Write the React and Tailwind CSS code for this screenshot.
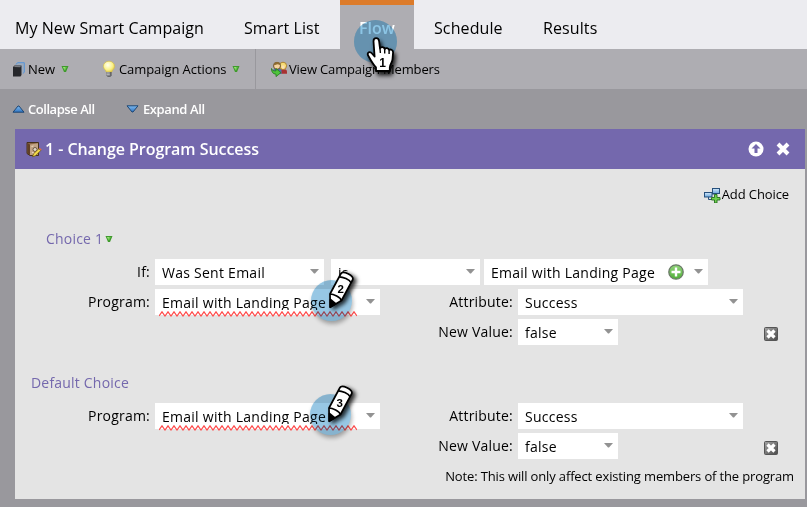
import React from "react";

function GreenArrow() {
  return (
    <svg width="8" height="8" viewBox="0 0 8 8" className="shrink-0">
      <path d="M0.500 1h7L5 7H3z" fill="#3f9a2c" />
      <path d="M1.800 2h4L4.200 5.200h-.8z" fill="#6cc94e" />
      <path d="M2 2h2L3.400 4z" fill="#a0e082" />
    </svg>
  );
}

function BlueArrow({ down }) {
  return (
    <svg width="13" height="8" viewBox="0 0 13 8" className="shrink-0">
      <defs>
        <linearGradient id="ba" x1="0" y1="0" x2="0" y2="1">
          <stop offset="0" stopColor="#7fbaf0" />
          <stop offset="1" stopColor="#2f75c2" />
        </linearGradient>
      </defs>
      <path d={down ? "M1 .8h11L7 7H6z" : "M1 7.200h11L7 1H6z"} fill="url(#ba)" stroke="#1f4673" strokeWidth="1" />
    </svg>
  );
}

function Bulb() {
  return (
    <svg width="14" height="18" viewBox="0 0 14 18" className="shrink-0">
      <defs>
        <radialGradient id="bulb" cx="0.4" cy="0.35" r="0.7">
          <stop offset="0" stopColor="#fffff0" />
          <stop offset="0.6" stopColor="#faf28a" />
          <stop offset="1" stopColor="#e0c63c" />
        </radialGradient>
      </defs>
      <path d="M7 1.2C3.7 1.2 1.4 3.500 1.400 6.400c0 2.700 2.600 3.600 2.900 5.800h5.400c.3-2.200 2.900-3.100 2.900-5.800C12.600 3.500 10.300 1.200 7 1.200z" fill="url(#bulb)" stroke="#d3bb50" strokeWidth="0.7" />
      <path d="M4.300 12h5.400v3.300L8.300 17H5.700l-1.400-1.700z" fill="#66676b" />
      <path d="M4.500 13h3.300M4.500 14.800h3.300" stroke="#dcdcdf" strokeWidth="0.900" />
    </svg>
  );
}

function NewIcon() {
  return (
    <svg width="12" height="15" viewBox="0 0 12 15" className="shrink-0">
      <path d="M3 2.500L4.500.7h6.800v9.600l-1.500 1.200" fill="#9dabbc" stroke="#5594d8" strokeWidth="1" />
      <path d="M0 5L1.500 3.500H8.500V13L7.500 14.500H0z" fill="#26272b" />
      <path d="M.8 5L2 3.800h6L7.200 5.200z" fill="#77797e" />
    </svg>
  );
}

function Members() {
  return (
    <svg width="17" height="16" viewBox="0 0 17 16" className="shrink-0">
      <path d="M9 9.500c0-2 7-2 7 1v2.300H9z" fill="#a83232" />
      <path d="M2 9c1-2 8-2 8.500 0v4H3z" fill="#4a73b5" />
      <circle cx="12" cy="4.800" r="3.600" fill="#f6dc75" stroke="#a97d28" strokeWidth="0.900" />
      <path d="M10.500 4.500h3v3.200h-2.500z" fill="#fbe0b5" />
      <circle cx="6" cy="4.800" r="3.500" fill="#f5d3a0" stroke="#5b4422" strokeWidth="0.900" />
      <path d="M2.600 4.500C2.600 0 9.400 0 9.400 4L6.500 3.200z" fill="#8d6c33" />
      <path d="M.5 7.500c.5 2 2 2.500 4.500 2.400V7.600l5 4-5 4v-2.400C2 13 .3 11 .5 7.500z" fill="#4fc43c" stroke="#237a1a" strokeWidth="0.800" />
    </svg>
  );
}

function StepIcon() {
  return (
    <svg width="16" height="17" viewBox="0 0 16 17" className="shrink-0">
      <path d="M1 1.500h11.500v13H4L1 12.500z" fill="#8a6544" stroke="#46301c" strokeWidth="1" />
      <path d="M4 3.500l8-1.200v11.700H4z" fill="#c2a283" />
      <path d="M1.500 2L4 3.800v10.200L1.500 12.300z" fill="#604026" />
      <path d="M5.500 5.500l2-.5M6 11.500l2 .5" stroke="#ead9c2" strokeWidth="1" />
      <circle cx="9" cy="8.500" r="2" fill="#dfd6c8" stroke="#594331" strokeWidth="0.800" />
      <path d="M6.500 15.800l1-3L12.800 7.700l2 1.800-5.300 5.300z" fill="#f2da48" stroke="#6a5419" strokeWidth="0.800" />
      <path d="M12.800 7.700l1-1 2 1.800-1 1z" fill="#d96b4b" />
    </svg>
  );
}

function AddChoiceIcon() {
  return (
    <svg width="17" height="16" viewBox="0 0 17 16" className="shrink-0">
      <defs>
        <linearGradient id="ac" x1="0" y1="0" x2="0" y2="1">
          <stop offset="0" stopColor="#d4eafb" />
          <stop offset="1" stopColor="#6ba6dc" />
        </linearGradient>
      </defs>
      <path d="M8 7h3M4.500 10v2.500H8" stroke="#27507c" fill="none" />
      <rect x="8.500" y="1.500" width="7" height="5" fill="url(#ac)" stroke="#27507c" />
      <rect x="0.500" y="5.500" width="7.500" height="4.500" fill="url(#ac)" stroke="#27507c" />
      <path d="M10.500 7.500h2.500v3h3V13h-3v3h-2.500v-3h-3v-2.500h3z" fill="#6fd04e" stroke="#256d1d" strokeWidth="0.900" />
    </svg>
  );
}

function DeleteIcon() {
  return (
    <svg width="14" height="14" viewBox="0 0 14 14" className="shrink-0">
      <defs>
        <linearGradient id="del" x1="0" y1="0" x2="1" y2="1">
          <stop offset="0" stopColor="#a5a5a5" />
          <stop offset="1" stopColor="#4a4a4a" />
        </linearGradient>
      </defs>
      <rect x="0.500" y="0.500" width="13" height="13" rx="1" fill="url(#del)" stroke="#555" />
      <path d="M3.500 3.500l7 7M10.500 3.500l-7 7" stroke="#fff" strokeWidth="3.200" />
    </svg>
  );
}

function PlusIcon() {
  return (
    <svg width="16" height="16" viewBox="0 0 16 16" className="shrink-0">
      <defs>
        <linearGradient id="pl" x1="0" y1="0" x2="0" y2="1">
          <stop offset="0" stopColor="#93d67c" />
          <stop offset="1" stopColor="#4fae37" />
        </linearGradient>
      </defs>
      <circle cx="8" cy="8" r="7.200" fill="url(#pl)" stroke="#6b7a68" strokeWidth="1.300" />
      <path d="M8 3.500v9M3.500 8h9" stroke="#fff" strokeWidth="2.400" />
    </svg>
  );
}

function Caret() {
  return (
    <svg width="9" height="5" viewBox="0 0 9 5" className="shrink-0">
      <path d="M0 0h9L5 4.500h-1z" fill="#929292" />
    </svg>
  );
}

function Squiggle() {
  const points = Array.from({ length: 67 }, (_, i) => `${i * 3},${i % 2 ? 0.8 : 5}`).join(" ");
  return (
    <svg width="198" height="6" viewBox="0 0 198 6" className="absolute left-[3.5px] top-[22px]">
      <polyline points={points} fill="none" stroke="#ff4a4a" strokeWidth="1.200" />
    </svg>
  );
}

function Field({ width, children, extra, misspelled, clip }) {
  return (
    <div className={`relative flex h-[26px] shrink-0 bg-white pl-[7px] pr-[5px] ${width}`}>
      <span className={`flex-1 whitespace-nowrap text-[14px] leading-[27px] tracking-[0.26px] ${clip ? "h-[21px] overflow-hidden" : ""}`}>{children}</span>
      {extra}
      <span className="pt-[10px] flex"><Caret /></span>
      {misspelled && <Squiggle />}
    </div>
  );
}

function Label({ width, children }) {
  return <span className={`shrink-0 text-right text-[14px] leading-[25px] tracking-[0.2px] ${width}`}>{children}</span>;
}

function ProgramRows() {
  return (
    <>
      <div className="flex h-[26px]">
        <Label width="w-[135px]">Program:</Label>
        <div className="w-[5px]" />
        <Field width="w-[225px]" misspelled clip>Email with Landing Page</Field>
        <Label width="w-[133px]">Attribute:</Label>
        <div className="w-[5px]" />
        <Field width="w-[225px]">Success</Field>
      </div>
      <div className="mt-1 flex h-[26px]">
        <Label width="w-[498px]">New Value:</Label>
        <div className="w-[5px]" />
        <Field width="w-[100px]">false</Field>
        <div className="ml-[146px] pt-2"><DeleteIcon /></div>
      </div>
    </>
  );
}

function Pencil({ n, place, halo }) {
  return (
    <>
      <div className={`absolute size-[41px] rounded-full bg-[#a8d3ec] mix-blend-multiply shadow-[1px_3px_4px_rgba(0,0,0,0.3)] ${halo}`} />
      <svg width="60" height="60" viewBox="0 0 60 60" className={`absolute ${place}`}>
        <defs>
          <filter id={`ps${n}`} x="-50%" y="-50%" width="200%" height="200%">
            <feDropShadow dx="3" dy="2" stdDeviation="2" floodColor="#000" floodOpacity="0.800" />
          </filter>
        </defs>
        <circle cx="21.500" cy="35.800" r="20.500" fill="#2a78b0" fillOpacity="0.130" />
        <g filter={`url(#ps${n})`} stroke="#000" strokeWidth="1.700" strokeLinejoin="round">
          <path d="M20 29L31 8.500c1.800-3.200 13 1.800 11.800 6L31.500 35.500 20.200 42.300z" fill="#fff" />
          <path d="M20 29c3.500 0 10.500 3 11.500 6.500M29.200 11.800c3.500 0 10.500 2.700 11.800 6" fill="none" />
          <path d="M20.200 42l.2-7.500 5.200 4.200z" fill="#000" />
        </g>
        <text x="30.800" y="28.300" textAnchor="middle" fontFamily="Liberation Sans, sans-serif" fontWeight="700" fontSize="11.500">{n}</text>
      </svg>
    </>
  );
}

function Hand() {
  return (
    <>
      <div className="absolute left-[354px] top-[20px] size-[43px] rounded-full bg-[#a2d2ee] mix-blend-multiply" />
      <svg width="60" height="70" viewBox="0 0 60 70" className="absolute left-[350px] top-[16px]">
        <defs>
          <filter id="hs" x="-50%" y="-50%" width="200%" height="200%">
            <feDropShadow dx="2" dy="3.500" stdDeviation="2" floodColor="#000" floodOpacity="0.850" />
          </filter>
        </defs>
        <circle cx="25.500" cy="25.500" r="21.500" fill="#4a9ecb" fillOpacity="0.250" />
        <path
          filter="url(#hs)"
          d="M23.500 25.200c0-4 5.200-4 5.600 0l.9 7.300c.9-2 4.300-1.700 4.700.7 1-1.700 4-1.200 4.400 1 1-1.300 4-.7 4 2.200l-.6 7c-.2 3-2.700 5-2.700 7.800V55H26v-3.500c-3-3-4.800-6.500-8-12.200-1.300-3 2-4.300 4-1.800l2.600 3z"
          fill="#fff"
          stroke="#000"
          strokeWidth="1.800"
          strokeLinejoin="round"
        />
        <path d="M30 32.500l.4 4.500M34.700 33.500v4M39.100 34.500v3.500" stroke="#000" strokeWidth="1.400" />
        <text x="32.500" y="51" textAnchor="middle" fontFamily="Liberation Sans, sans-serif" fontWeight="700" fontSize="12">1</text>
      </svg>
    </>
  );
}

export default function App() {
  return (
    <div className="relative h-[507px] w-[807px] overflow-hidden bg-[#99989d] font-['Open_Sans',sans-serif] text-black">
      <nav className="flex h-[49px] bg-[#ececf0] text-[16px] leading-[56px] whitespace-nowrap">
        <div className="w-[224px] pl-[15px] tracking-[0.04px]">My New Smart Campaign</div>
        <div className="w-[116px] pl-5 tracking-[0.1px]">Smart List</div>
        <div className="w-[74px] border-t-[5px] border-[#dc7b2a] bg-[#aeadb2] text-center font-semibold leading-[46px] text-white">Flow</div>
        <div className="w-[109px] pl-5 tracking-[0.1px]">Schedule</div>
        <div className="pl-5 tracking-[0.1px]">Results</div>
      </nav>
      <div className="flex h-10 items-center bg-[#aeadb2] text-[13px] whitespace-nowrap">
        <div className="flex h-10 w-[256px] items-center border-r border-[#99989d] pl-[13px]">
          <NewIcon />
          <span className="ml-[3px] w-[33px] pt-0.5">New</span>
          <GreenArrow />
          <span className="ml-[33px] flex"><Bulb /></span>
          <span className="ml-[3px] w-[113px] pt-0.5 tracking-[-0.08px]">Campaign Actions</span>
          <GreenArrow />
        </div>
        <span className="ml-[15px] flex"><Members /></span>
        <span className="ml-px pt-0.5 tracking-[-0.15px]">View Campaign Members</span>
      </div>
      <div className="flex h-10 items-center pl-3 text-[13px] font-semibold text-white whitespace-nowrap">
        <BlueArrow />
        <span className="ml-[3px] w-[98px] pt-0.5 tracking-[-0.45px]">Collapse All</span>
        <BlueArrow down />
        <span className="ml-[4px] pt-0.5 tracking-[-0.4px]">Expand All</span>
      </div>
      <section className="ml-[15px] h-[370px] w-[790px] bg-[#e4e4e4]">
        <header className="flex h-10 items-center bg-[#7468ad] pl-[11px] pr-[15px] text-white">
          <StepIcon />
          <h1 className="ml-[3px] flex-1 text-[16px] font-semibold tracking-[-0.05px]">1 - Change Program Success</h1>
          <svg width="16" height="16" viewBox="0 0 16 16">
            <circle cx="8" cy="8" r="7.500" fill="#fff" />
            <path d="M8 3l4.500 4.500h-3V12h-3V7.500h-3z" fill="#7468ad" />
          </svg>
          <svg width="14" height="14" viewBox="0 0 14 14" className="ml-3">
            <path d="M2 2l10 10M12 2L2 12" stroke="#fff" strokeWidth="4" />
          </svg>
        </header>
        <div className="flex h-[50px] items-center justify-end pr-[16px] pt-0.5 text-[13px]">
          <AddChoiceIcon />
          <span className="ml-px tracking-[-0.1px]">Add Choice</span>
        </div>
        <div className="flex h-10 items-center pb-0.5 pl-[31px] text-[14px] text-[#7468ad]">
          <span className="tracking-[0.2px]">Choice 1</span>
          <span className="ml-0.5 pt-0.5"><GreenArrow /></span>
        </div>
        <div className="mb-1 flex h-[26px]">
          <Label width="w-[135px]">If:</Label>
          <div className="w-[5px]" />
          <Field width="w-[169px]">Was Sent Email</Field>
          <div className="w-[7px]" />
          <Field width="w-[149px]">is</Field>
          <div className="w-1" />
          <Field width="w-[224px]" extra={<span className="mr-[10px] pt-[5px]"><PlusIcon /></span>}>Email with Landing Page</Field>
        </div>
        <ProgramRows />
        <div className="flex h-[58px] items-end pb-[10px] pl-4 text-[14px] tracking-[0.2px] text-[#7468ad]">Default Choice</div>
        <ProgramRows />
        <p className="pr-[11px] pt-[8px] text-right text-[13px] leading-[18px] tracking-[-0.14px]">Note: This will only affect existing members of the program</p>
      </section>
      <Hand />
      <Pencil n="2" halo="left-[311px] top-[280px]" place="left-[310px] top-[265px]" />
      <Pencil n="3" halo="left-[310px] top-[394px]" place="left-[309px] top-[379px]" />
    </div>
  );
}
